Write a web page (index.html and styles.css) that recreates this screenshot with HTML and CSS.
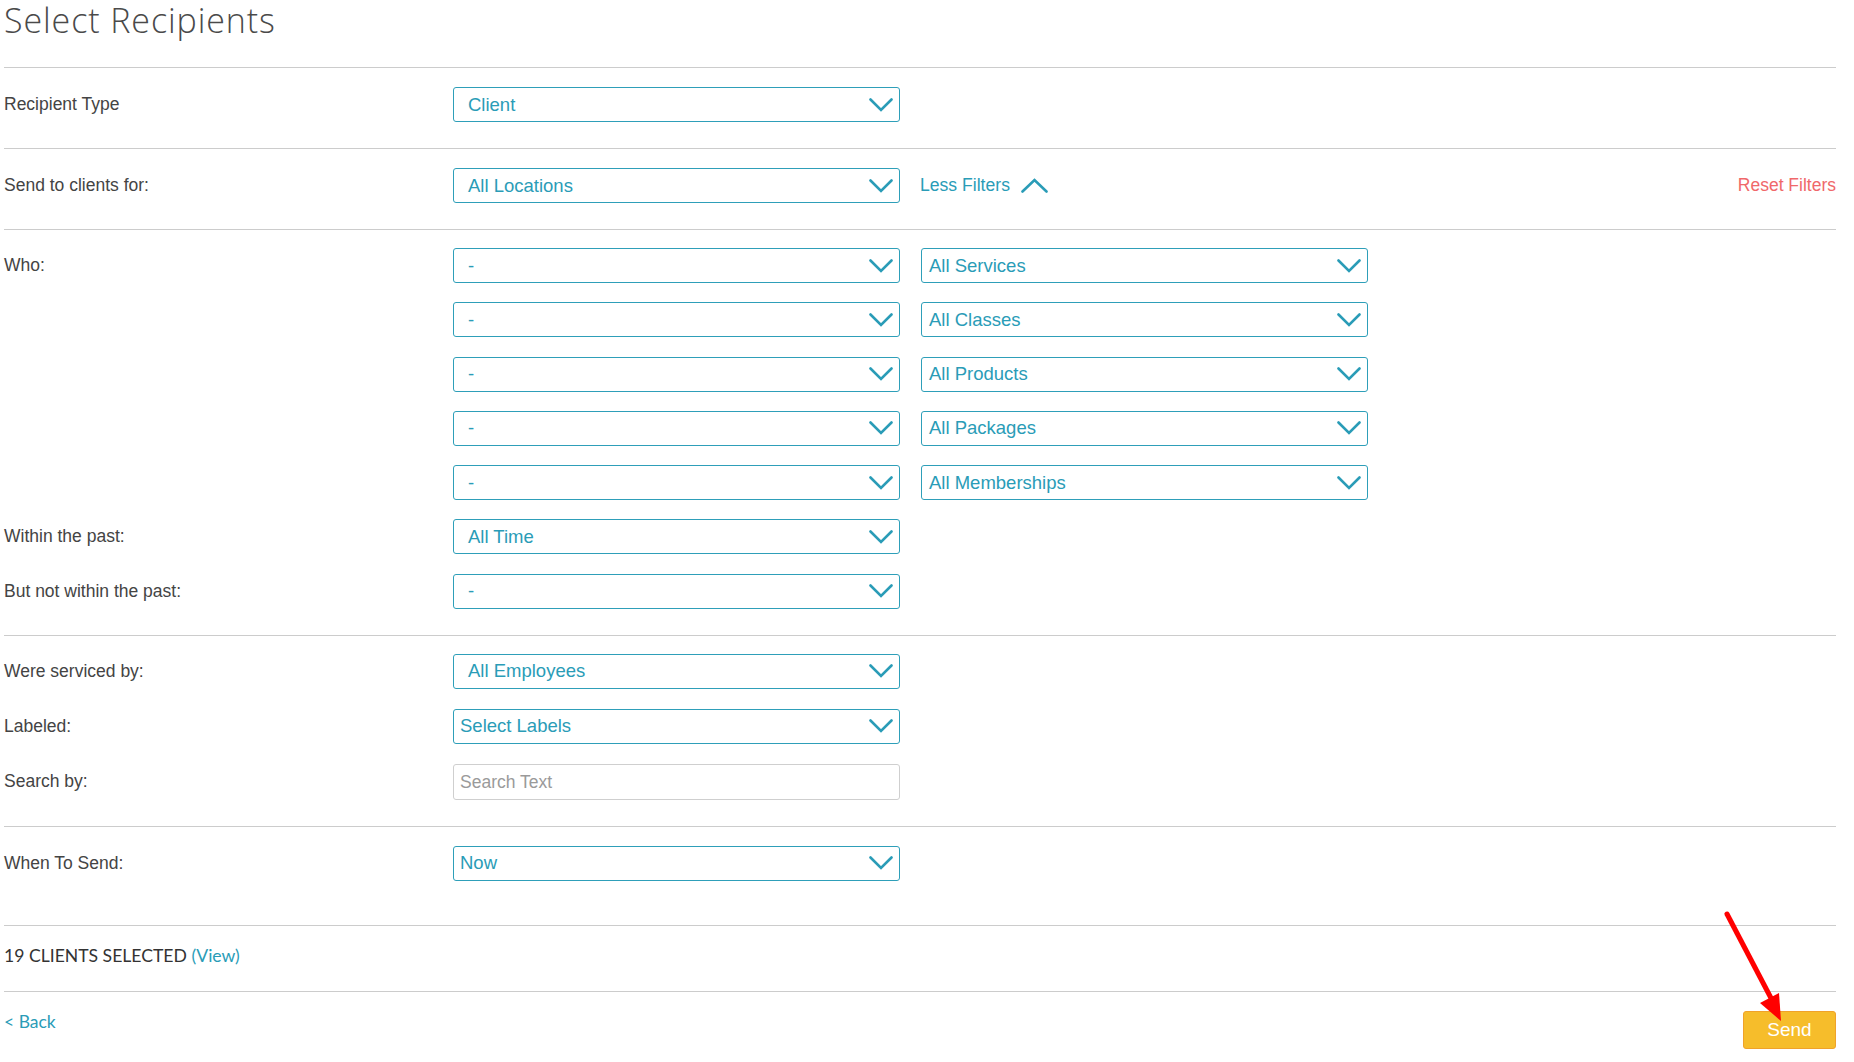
FILE: index.html
```html
<!DOCTYPE html>
<html lang="en">
<head>
<meta charset="utf-8">
<title>Select Recipients</title>
<link rel="stylesheet" href="styles.css">
</head>
<body>
<div class="page">
  <h1 class="title">Select Recipients</h1>

  <section class="sec sec-type">
    <div class="row">
      <div class="label">Recipient Type</div>
      <div class="fields one">
        <div class="select pad-wide"><span>Client</span><svg class="chev" viewBox="0 0 24 14"><path d="M1.5 1.5 L12 12 L22.5 1.5"/></svg></div>
      </div>
    </div>
  </section>

  <section class="sec sec-loc">
    <div class="row">
      <div class="label">Send to clients for:</div>
      <div class="loc-fields">
        <div class="select pad-wide"><span>All Locations</span><svg class="chev" viewBox="0 0 24 14"><path d="M1.5 1.5 L12 12 L22.5 1.5"/></svg></div>
        <a class="less">Less Filters <svg class="chev-up" viewBox="0 0 27 15"><path d="M1.5 13.5 L13.5 2 L25.5 13.5"/></svg></a>
        <a class="reset">Reset Filters</a>
      </div>
    </div>
  </section>

  <section class="sec sec-who">
    <div class="row">
      <div class="label">Who:</div>
      <div class="fields two">
        <div class="select pad-wide"><span>-</span><svg class="chev" viewBox="0 0 24 14"><path d="M1.5 1.5 L12 12 L22.5 1.5"/></svg></div>
        <div class="select pad-narrow"><span>All Services</span><svg class="chev" viewBox="0 0 24 14"><path d="M1.5 1.5 L12 12 L22.5 1.5"/></svg></div>
        <div class="select pad-wide"><span>-</span><svg class="chev" viewBox="0 0 24 14"><path d="M1.5 1.5 L12 12 L22.5 1.5"/></svg></div>
        <div class="select pad-narrow"><span>All Classes</span><svg class="chev" viewBox="0 0 24 14"><path d="M1.5 1.5 L12 12 L22.5 1.5"/></svg></div>
        <div class="select pad-wide"><span>-</span><svg class="chev" viewBox="0 0 24 14"><path d="M1.5 1.5 L12 12 L22.5 1.5"/></svg></div>
        <div class="select pad-narrow"><span>All Products</span><svg class="chev" viewBox="0 0 24 14"><path d="M1.5 1.5 L12 12 L22.5 1.5"/></svg></div>
        <div class="select pad-wide"><span>-</span><svg class="chev" viewBox="0 0 24 14"><path d="M1.5 1.5 L12 12 L22.5 1.5"/></svg></div>
        <div class="select pad-narrow"><span>All Packages</span><svg class="chev" viewBox="0 0 24 14"><path d="M1.5 1.5 L12 12 L22.5 1.5"/></svg></div>
        <div class="select pad-wide"><span>-</span><svg class="chev" viewBox="0 0 24 14"><path d="M1.5 1.5 L12 12 L22.5 1.5"/></svg></div>
        <div class="select pad-narrow"><span>All Memberships</span><svg class="chev" viewBox="0 0 24 14"><path d="M1.5 1.5 L12 12 L22.5 1.5"/></svg></div>
      </div>
    </div>
    <div class="row">
      <div class="label">Within the past:</div>
      <div class="fields one">
        <div class="select pad-wide"><span>All Time</span><svg class="chev" viewBox="0 0 24 14"><path d="M1.5 1.5 L12 12 L22.5 1.5"/></svg></div>
      </div>
    </div>
    <div class="row">
      <div class="label">But not within the past:</div>
      <div class="fields one">
        <div class="select pad-wide"><span>-</span><svg class="chev" viewBox="0 0 24 14"><path d="M1.5 1.5 L12 12 L22.5 1.5"/></svg></div>
      </div>
    </div>
  </section>

  <section class="sec sec-more">
    <div class="row">
      <div class="label">Were serviced by:</div>
      <div class="fields one">
        <div class="select pad-wide"><span>All Employees</span><svg class="chev" viewBox="0 0 24 14"><path d="M1.5 1.5 L12 12 L22.5 1.5"/></svg></div>
      </div>
    </div>
    <div class="row">
      <div class="label">Labeled:</div>
      <div class="fields one">
        <div class="select pad-small"><span>Select Labels</span><svg class="chev" viewBox="0 0 24 14"><path d="M1.5 1.5 L12 12 L22.5 1.5"/></svg></div>
      </div>
    </div>
    <div class="row">
      <div class="label">Search by:</div>
      <div class="fields one">
        <div class="input"><span>Search Text</span></div>
      </div>
    </div>
  </section>

  <section class="sec sec-when">
    <div class="row">
      <div class="label">When To Send:</div>
      <div class="fields one">
        <div class="select pad-small"><span>Now</span><svg class="chev" viewBox="0 0 24 14"><path d="M1.5 1.5 L12 12 L22.5 1.5"/></svg></div>
      </div>
    </div>
  </section>

  <section class="sec sec-count">
    <div class="count">19 CLIENTS SELECTED <a class="view">(View)</a></div>
  </section>

  <section class="sec sec-foot">
    <a class="back">&lt; Back</a>
    <button class="send">Send</button>
  </section>

  <svg class="arrow" viewBox="0 0 80 130" width="80" height="130">
    <line x1="5" y1="5" x2="50" y2="91" />
    <polygon points="59,112 38,94 57,84" />
  </svg>
</div>
</body>
</html>
```

FILE: styles.css
```css
html, body {
  margin: 0;
  padding: 0;
  background: #ffffff;
}

body {
  font-family: "Liberation Sans", Arial, sans-serif;
  color: #4a4a4a;
}

.page {
  position: relative;
  width: 1832px;
  padding-left: 4px;
}

.title {
  margin: 0 0 26px 0;
  font-family: "Open Sans", Lato, sans-serif;
  font-weight: 300;
  font-size: 34px;
  line-height: 41px;
  letter-spacing: 0.9px;
  color: #4a4a4a;
}

.sec {
  border-top: 1px solid #cccccc;
}

.sec-type { padding: 19px 0 26px; }
.sec-loc { padding: 19px 0 26px; }
.sec-who { padding: 18px 0 26px; display: flex; flex-direction: column; row-gap: 19.3px; }
.sec-more { padding: 18px 0 26px; display: flex; flex-direction: column; row-gap: 20.2px; }
.sec-when { padding: 18.5px 0 44.5px; }

.row {
  display: flex;
  align-items: flex-start;
}

.label {
  width: 449px;
  flex: none;
  font-size: 17.5px;
  line-height: 35px;
  color: #444444;
}

.fields {
  display: grid;
  column-gap: 21px;
  row-gap: 19.3px;
}
.fields.one { grid-template-columns: 447px; }
.fields.two { grid-template-columns: 447px 447px; }

.select, .input {
  box-sizing: border-box;
  height: 35px;
  border: 1px solid #2e9fb9;
  border-radius: 3px;
  display: flex;
  align-items: center;
  justify-content: space-between;
  font-size: 18.5px;
  color: #2a9cb7;
  padding-right: 6px;
  background: #fff;
}

.pad-wide { padding-left: 14px; }
.pad-narrow { padding-left: 7px; }
.pad-small { padding-left: 6px; }

.chev {
  width: 24px;
  height: 14px;
  flex: none;
}
.chev path, .chev-up path {
  fill: none;
  stroke: #2a9cb7;
  stroke-width: 2.6;
  stroke-linecap: round;
  stroke-linejoin: miter;
}

.input {
  height: 36px;
  border-color: #cfcfcf;
  padding-left: 6px;
  color: #9a9a9a;
  font-size: 17.5px;
}

.loc-fields {
  flex: 1;
  display: flex;
  align-items: center;
  height: 35px;
}
.loc-fields .select {
  width: 447px;
  flex: none;
}

.less {
  margin-left: 20px;
  display: flex;
  align-items: center;
  gap: 11px;
  font-size: 17.6px;
  color: #2a9cb7;
}
.chev-up {
  width: 27px;
  height: 15px;
}

.reset {
  margin-left: auto;
  font-size: 17.5px;
  color: #f0686a;
}

.sec-count {
  height: 66px;
  box-sizing: border-box;
  padding-bottom: 7px;
  display: flex;
  align-items: center;
}

.count {
  font-family: Lato, "Open Sans", sans-serif;
  font-size: 17.6px;
  font-weight: 400;
  color: #333333;
}
.view {
  color: #2a9cb7;
}

.sec-foot {
  padding-top: 19px;
  display: flex;
  justify-content: space-between;
  align-items: flex-start;
}

.back {
  margin-top: 0;
  font-family: Lato, "Open Sans", sans-serif;
  font-size: 17.5px;
  color: #2a9cb7;
}

.send {
  width: 93px;
  height: 38px;
  box-sizing: border-box;
  background: #f6bd2b;
  border: 1px solid #f0a22a;
  border-radius: 3px;
  color: #ffffff;
  font-family: "Liberation Sans", Arial, sans-serif;
  font-size: 19px;
  padding: 0;
}

.arrow {
  position: absolute;
  left: 1722px;
  top: 909px;
  overflow: visible;
}
.arrow line {
  stroke: #ff0000;
  stroke-width: 5;
  stroke-linecap: round;
}
.arrow polygon {
  fill: #ff0000;
}
```
